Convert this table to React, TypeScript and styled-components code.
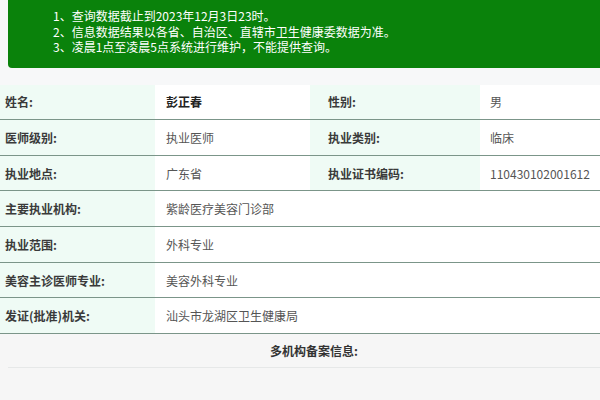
import React from "react";
import styled, { createGlobalStyle } from "styled-components";

const GlobalStyle = createGlobalStyle`
  html, body {
    margin: 0;
    padding: 0;
    background: #f7f8f9;
  }
  body {
    font-family: "Microsoft YaHei", "Noto Sans CJK SC", "Noto Sans", sans-serif;
    width: 600px;
    height: 400px;
    overflow: hidden;
  }
`;

const Page = styled.div`
  display: flex;
  flex-direction: column;
  width: 600px;
`;

const Notice = styled.div`
  margin-left: 8px;
  background: #0a820b;
  border-bottom-left-radius: 4px;
  padding: 8px 0 13px 45px;
  color: #ffffff;
  font-size: 12px;
  line-height: 15.5px;
`;

const NoticeLine = styled.div`
  white-space: nowrap;
`;

const Table = styled.div`
  margin-top: 17px;
  display: flex;
  flex-direction: column;
  background: #ffffff;
`;

const Row = styled.div`
  display: grid;
  grid-template-columns: ${(p: { $wide?: boolean }) =>
    p.$wide ? "155px 1fr" : "155px 155px 170px 1fr"};
  height: 34.67px;
  border-bottom: 1px solid #7b9589;
`;

const Label = styled.div`
  display: flex;
  align-items: center;
  background: #effbf5;
  padding-left: ${(p: { $pad?: number }) => p.$pad ?? 5}px;
  font-size: 12px;
  font-weight: bold;
  color: #3a3a3a;
  white-space: nowrap;
`;

const Value = styled.div`
  display: flex;
  align-items: center;
  background: #ffffff;
  padding-left: ${(p: { $pad?: number; $strong?: boolean }) => p.$pad ?? 11}px;
  font-size: 12px;
  font-weight: ${(p: { $pad?: number; $strong?: boolean }) =>
    p.$strong ? "bold" : "normal"};
  color: ${(p: { $pad?: number; $strong?: boolean }) =>
    p.$strong ? "#222" : "#555"};
  white-space: nowrap;
`;

const SubSection = styled.div`
  display: flex;
  flex-direction: column;
  background: #f6f6f6;
`;

const SubTitle = styled.div`
  height: 33px;
  display: flex;
  align-items: center;
  justify-content: center;
  padding-left: 20px;
  font-size: 12px;
  font-weight: bold;
  color: #333;
  margin-left: 8px;
  border-bottom: 1px solid #e6e8e8;
`;

const Empty = styled.div`
  height: 40px;
`;

export default function App() {
  return (
    <>
      <GlobalStyle />
      <Page>
        <Notice>
          <NoticeLine>1、查询数据截止到2023年12月3日23时。</NoticeLine>
          <NoticeLine>2、信息数据结果以各省、自治区、直辖市卫生健康委数据为准。</NoticeLine>
          <NoticeLine>3、凌晨1点至凌晨5点系统进行维护，不能提供查询。</NoticeLine>
        </Notice>
        <Table>
          <Row>
            <Label>姓名:</Label>
            <Value $strong>彭正春</Value>
            <Label $pad={18}>性别:</Label>
            <Value $pad={10}>男</Value>
          </Row>
          <Row>
            <Label>医师级别:</Label>
            <Value>执业医师</Value>
            <Label $pad={18}>执业类别:</Label>
            <Value $pad={10}>临床</Value>
          </Row>
          <Row>
            <Label>执业地点:</Label>
            <Value>广东省</Value>
            <Label $pad={18}>执业证书编码:</Label>
            <Value $pad={10}>110430102001612</Value>
          </Row>
          <Row $wide>
            <Label>主要执业机构:</Label>
            <Value>紫龄医疗美容门诊部</Value>
          </Row>
          <Row $wide>
            <Label>执业范围:</Label>
            <Value>外科专业</Value>
          </Row>
          <Row $wide>
            <Label>美容主诊医师专业:</Label>
            <Value>美容外科专业</Value>
          </Row>
          <Row $wide>
            <Label>发证(批准)机关:</Label>
            <Value>汕头市龙湖区卫生健康局</Value>
          </Row>
        </Table>
        <SubSection>
          <SubTitle>多机构备案信息:</SubTitle>
          <Empty />
        </SubSection>
      </Page>
    </>
  );
}
